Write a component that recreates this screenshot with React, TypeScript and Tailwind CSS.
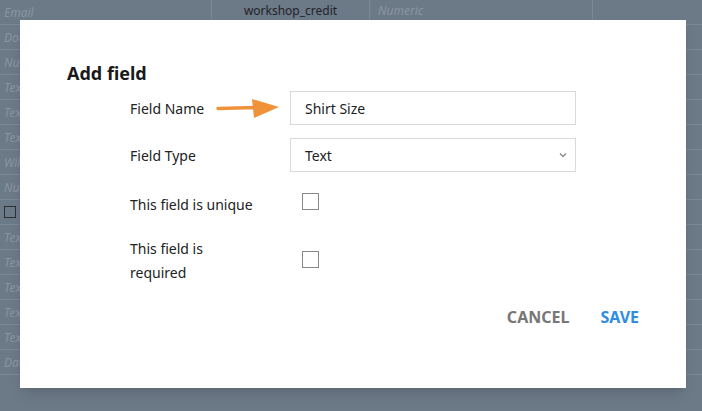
export default function App() {
  const rows = ["Email", "Double", "Number", "Text", "Text", "Text", "Wildcard", "Number", "", "Text", "Text", "Text", "Text", "Text", "Date"];
  return (
    <div className="relative w-[702px] h-[411px] overflow-hidden bg-[#6c7987] font-['Open_Sans',sans-serif]">
      {/* faint table behind */}
      <div className="flex flex-col">
        {rows.map((r, i) => (
          <div key={i} className="flex h-[25px] border-b border-[#7d8895] text-[12px] italic text-[#8a95a1]">
            <div className="w-[212px] border-r border-[#7d8895] pl-1 leading-[25px]">
              {i === 8 ? <span className="inline-block w-[12px] h-[12px] border border-[#2b3138] mt-[6px]" /> : r}
            </div>
            <div className="w-[158px] border-r border-[#7d8895] text-center leading-[22px] not-italic text-[#1f2328]">
              {i === 0 ? "workshop_credit" : ""}
            </div>
            <div className="w-[223px] border-r border-[#7d8895] pl-2 leading-[22px]">{i === 0 ? "Numeric" : ""}</div>
            <div className="flex-1" />
          </div>
        ))}
      </div>

      {/* modal */}
      <div className="absolute left-[20px] top-[20px] w-[666px] h-[368px] bg-white shadow-lg">
        <div className="pl-[47px] pt-[40px] text-[18px] font-bold text-[#1a1a1a]">Add field</div>
        <div className="pl-[110px] pt-[4px] text-[14px] text-[#222]">
          <div className="flex items-center h-[34px]">
            <div className="w-[160px] flex items-center">
              <span>Field Name</span>
              <svg width="64" height="22" viewBox="0 0 64 22" className="ml-[12px]">
                <path d="M2 11.5 L40 10.5" stroke="#f0923a" strokeWidth="3.5" strokeLinecap="round" />
                <path d="M36 2 L63 10 L38 21 Z" fill="#f0923a" />
              </svg>
            </div>
            <div className="w-[286px] h-[34px] border border-[#d9d9d9] pl-[14px] flex items-center">Shirt Size</div>
          </div>
          <div className="flex items-center h-[34px] mt-[13px]">
            <div className="w-[160px]">Field Type</div>
            <div className="w-[286px] h-[34px] border border-[#d9d9d9] pl-[14px] pr-[6px] flex items-center justify-between">
              <span>Text</span>
              <svg width="12" height="12" viewBox="0 0 12 12"><path d="M3 4.5 L6 7.5 L9 4.5" fill="none" stroke="#888" strokeWidth="1.3" /></svg>
            </div>
          </div>
          <div className="flex items-center h-[26px] mt-[19px]">
            <div className="w-[172px]">This field is unique</div>
            <div className="w-[17px] h-[17px] border border-[#888] -mt-[6px]" />
          </div>
          <div className="flex items-center mt-[20px]">
            <div className="w-[172px] leading-[24px]">This field is<br />required</div>
            <div className="w-[17px] h-[17px] border border-[#888] -mt-[4px]" />
          </div>
        </div>
        <div className="flex justify-end gap-[31px] pr-[47px] mt-[20px] text-[16px] font-bold">
          <span className="text-[#777]">CANCEL</span>
          <span className="text-[#2f8de4]">SAVE</span>
        </div>
      </div>
    </div>
  );
}
